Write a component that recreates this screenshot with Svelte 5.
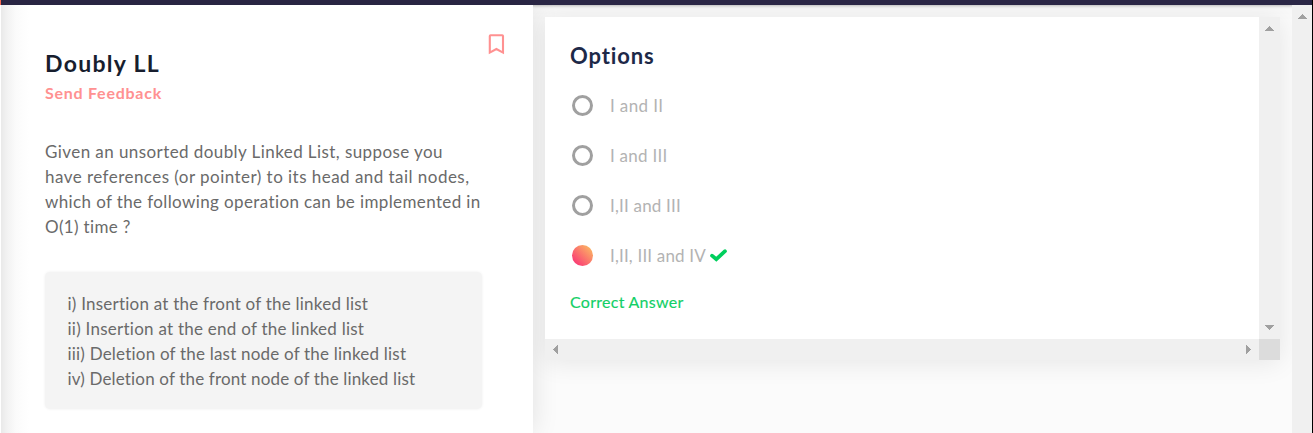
<script>
  const paragraph = [
    ['Given an unsorted doubly Linked List, suppose you', 398],
    ['have references (or pointer) to its head and tail nodes,', 424.5],
    ['which of the following operation can be implemented in', 436],
    ['O(1) time ?', 86],
  ];
  const operations = [
    ['i) Insertion at the front of the linked list', 301],
    ['ii) Insertion at the end of the linked list', 297],
    ['iii) Deletion of the last node of the linked list', 339],
    ['iv) Deletion of the front node of the linked list', 348],
  ];
  const options = [
    { text: 'I and II', width: 53.5 },
    { text: 'I and III', width: 57.5 },
    { text: 'I,II and III', width: 71 },
    { text: 'I,II, III and IV', width: 96, selected: true },
  ];

  // Adjusts tracking so that a line of text occupies the given width.
  function track(node, width) {
    const natural = node.getBoundingClientRect().width;
    node.style.letterSpacing = `${(width - natural) / node.textContent.length}px`;
  }
</script>

<div class="page">
  <header></header>
  <div class="body">
    <section class="problem">
      <div class="head">
        <div>
          <h1><span use:track={115}>Doubly LL</span></h1>
          <div class="feedback"><span use:track={117}>Send Feedback</span></div>
        </div>
        <svg class="bookmark" width="17" height="21" viewBox="0 0 17 21">
          <path d="M1.8 2.1Q1.8 1.2 2.6 1.2H14.2Q15 1.2 15 2.1V18.6L8.4 15L1.8 18.6Z" fill="none" stroke="#ff9191" stroke-width="2.1" />
        </svg>
      </div>
      <div class="para">
        {#each paragraph as [line, width]}
          <div><span use:track={width}>{line}</span></div>
        {/each}
      </div>
      <div class="ops">
        {#each operations as [line, width]}
          <div><span use:track={width}>{line}</span></div>
        {/each}
      </div>
    </section>

    <main>
      <div class="card">
        <div class="content">
          <h2><span use:track={85}>Options</span></h2>
          {#each options as option}
            <div class="option">
              <i class="radio" class:selected={option.selected}></i>
              <span class="label" use:track={option.width}>{option.text}</span>
              {#if option.selected}
                <svg class="check" width="17" height="13" viewBox="0 0 17 13">
                  <path d="M2 6.6L6.3 10.2L15 2.2" fill="none" stroke="#00cf5d" stroke-width="3.7" stroke-linecap="round" />
                </svg>
              {/if}
            </div>
          {/each}
          <div class="correct"><span use:track={113.5}>Correct Answer</span></div>
        </div>
        <div class="bar vertical">
          <svg width="9" height="5" shape-rendering="crispEdges"><path d="M0 5L4.5 0L9 5Z" /></svg>
          <svg width="9" height="5" shape-rendering="crispEdges"><path d="M0 0L4.5 5L9 0Z" /></svg>
        </div>
        <div class="bar horizontal">
          <svg width="5" height="9" shape-rendering="crispEdges"><path d="M5 0L0 4.5L5 9Z" /></svg>
          <svg width="5" height="9" shape-rendering="crispEdges"><path d="M0 0L5 4.5L0 9Z" /></svg>
        </div>
        <div class="corner"></div>
      </div>
    </main>
    <aside>
      <svg width="9" height="5" shape-rendering="crispEdges"><path d="M0 5L4.5 0L9 5Z" /></svg>
    </aside>
  </div>
</div>

<style>
  :global(body) { margin: 0; overflow: hidden; }
  * { box-sizing: border-box; }
  .page {
    width: 1313px; height: 433px; display: flex; flex-direction: column; overflow: hidden;
    font-family: Lato, "Open Sans", sans-serif; font-size: 17px; color: #6a6a6a;
    background: #fbfbfb; border-right: 1px solid #000;
  }
  span { white-space: nowrap; }
  header {
    position: relative; z-index: 2; height: 5px; flex: none; background: #2b2746;
    border-left: 1px solid #ff6b52; box-shadow: 0 1px 3px rgba(0, 0, 0, .25), 0 2px 18px rgba(0, 0, 0, .06);
  }
  .body { display: flex; flex: 1; min-height: 0; }
  .problem {
    position: relative; z-index: 3; width: 533px; flex: none; padding: 41px 51px 0 44px;
    border-left: 1px solid #fff;
    background: linear-gradient(90deg, #e9e9e9, #f2f2f2 6px, #fbfbfb 15px, #fff 28px);
    box-shadow: 0 0 25px rgba(0, 0, 0, .11);
  }
  .head { display: flex; justify-content: space-between; height: 93px; }
  h1, h2 { margin: 0; font-weight: 700; }
  h1 { font-size: 23px; line-height: 34px; color: #171e2e; }
  .feedback { font-size: 16px; line-height: 26px; font-weight: 700; color: #ff9191; }
  .bookmark { margin: -12px -23px 0 0; flex: none; }
  .para { line-height: 25px; }
  .ops {
    width: 437px; height: 137px; margin-top: 33px; padding: 19px 22.5px;
    line-height: 25px; background: #f4f4f4; border-radius: 5px; box-shadow: 0 0 3px #eee;
  }
  main { flex: 1; padding: 12px 12px 0 12px; }
  .card {
    position: relative; z-index: 4;
    display: grid; grid-template: 322px 21px / 714px 21px; width: 735px; height: 343px;
    background: #f0f0f0; box-shadow: 0 2px 25px rgba(0, 0, 0, .09); clip-path: inset(-12px -12px -50px -12px);
  }
  .content { background: #fff; padding: 21px 25px 0; }
  h2 { font-size: 22px; line-height: 35px; height: 51px; color: #1d2948; }
  .option { height: 50px; display: flex; align-items: center; padding: 0 0 17px 2px; }
  .radio { width: 21px; height: 21px; border: 3px solid #a0a0a0; border-radius: 50%; margin-right: 17px; }
  .selected { border: 0; background: linear-gradient(45deg, #fa3975 12%, #fbb663 90%); }
  .label { color: #b3b3b3; font-weight: 400; }
  .check { margin-left: 4px; }
  .correct { font-size: 16px; line-height: 24px; font-weight: 400; color: #12cf66; -webkit-text-stroke: .15px #12cf66; margin-top: 1px; }
  .bar { display: flex; justify-content: space-between; align-items: center; background: #f0f0f0; }
  .bar svg, aside svg { fill: #a0a0a0; display: block; }
  .vertical { flex-direction: column; padding: 9px 0; }
  .horizontal { padding: 0 8px; }
  .corner { background: #dcdcdc; }
  aside { position: relative; z-index: 3; width: 20px; flex: none; padding: 9px 0 0 6px; background: #f0f0f0; }
</style>
